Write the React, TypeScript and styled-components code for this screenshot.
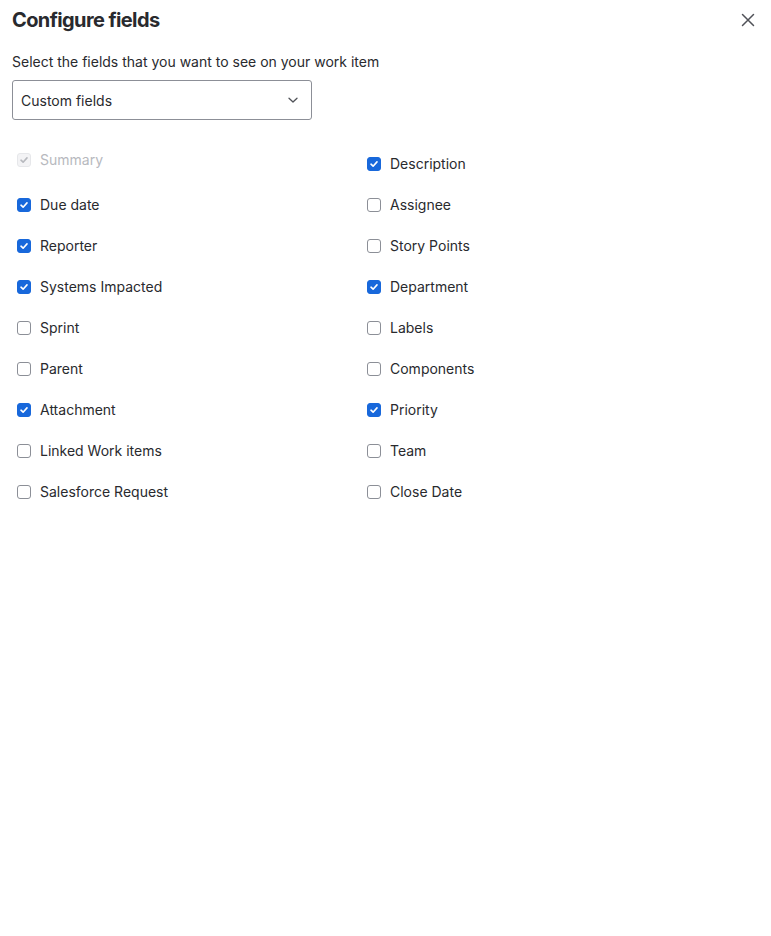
import * as React from 'react'
import styled, { createGlobalStyle } from 'styled-components'

const GlobalStyle = createGlobalStyle`
  html, body {
    margin: 0;
    padding: 0;
    background: #ffffff;
  }
  body {
    font-family: Inter, "Noto Sans", "Liberation Sans", sans-serif;
    color: #292a2e;
    -webkit-font-smoothing: antialiased;
  }
`

type Field = { label: string; checked: boolean; disabled?: boolean }

const LEFT: Field[] = [
  { label: 'Summary', checked: true, disabled: true },
  { label: 'Due date', checked: true },
  { label: 'Reporter', checked: true },
  { label: 'Systems Impacted', checked: true },
  { label: 'Sprint', checked: false },
  { label: 'Parent', checked: false },
  { label: 'Attachment', checked: true },
  { label: 'Linked Work items', checked: false },
  { label: 'Salesforce Request', checked: false }
]

const RIGHT: Field[] = [
  { label: 'Description', checked: true },
  { label: 'Assignee', checked: false },
  { label: 'Story Points', checked: false },
  { label: 'Department', checked: true },
  { label: 'Labels', checked: false },
  { label: 'Components', checked: false },
  { label: 'Priority', checked: true },
  { label: 'Team', checked: false },
  { label: 'Close Date', checked: false }
]

const Panel = styled.div`
  padding: 8px 12px;
  width: 747px;
`

const Header = styled.div`
  display: flex;
  align-items: center;
  justify-content: space-between;
  height: 24px;
`

const Title = styled.h1`
  margin: 0;
  font-size: 20px;
  line-height: 24px;
  font-weight: 700;
  color: #292a2e;
  letter-spacing: -0.6px;
`

const CloseButton = styled.button`
  display: flex;
  align-items: center;
  justify-content: center;
  width: 24px;
  height: 24px;
  margin-right: -1px;
  padding: 0;
  border: none;
  background: transparent;
  color: #505258;
  cursor: pointer;
`

const Subtitle = styled.p`
  margin: 20px 0 8px;
  font-size: 14px;
  line-height: 20px;
  color: #292a2e;
`

const Select = styled.div`
  box-sizing: border-box;
  display: flex;
  align-items: center;
  justify-content: space-between;
  width: 300px;
  height: 40px;
  padding: 0 12px 0 8px;
  border: 1px solid #8c8f97;
  border-radius: 3px;
  font-size: 14px;
  color: #292a2e;
`

const Chevron = styled.span`
  display: flex;
  color: #505258;
`

const FieldGrid = styled.div`
  display: grid;
  grid-template-columns: 350px 350px;
  grid-auto-rows: 41px;
  margin-top: 23px;
`

const Item = styled.label<{ $shift?: boolean }>`
  display: flex;
  align-items: center;
  gap: 9px;
  height: 41px;
  padding-left: 5px;
  margin-top: ${p => (p.$shift ? '-4px' : '0')};
  font-size: 14px;
  line-height: 20px;
  cursor: pointer;
`

const Box = styled.span<{ $checked: boolean; $disabled?: boolean }>`
  box-sizing: border-box;
  display: flex;
  align-items: center;
  justify-content: center;
  width: 14px;
  height: 14px;
  flex: none;
  border-radius: 3px;
  border: 1px solid
    ${p => (p.$disabled ? '#e6e7ea' : p.$checked ? '#1868db' : '#8c8f97')};
  background: ${p =>
    p.$disabled ? '#f3f3f5' : p.$checked ? '#1868db' : '#ffffff'};
  color: ${p => (p.$disabled ? '#b7b9be' : '#ffffff')};
`

const Label = styled.span<{ $disabled?: boolean }>`
  color: ${p => (p.$disabled ? '#b7b9be' : '#292a2e')};
`

function Check({ field, shift }: { field: Field; shift?: boolean }) {
  return (
    <Item $shift={shift}>
      <Box $checked={field.checked} $disabled={field.disabled}>
        {field.checked && (
          <svg width="10" height="10" viewBox="0 0 10 10" fill="none">
            <path
              d="M2 5.2 L4.1 7.2 L8 2.9"
              stroke="currentColor"
              strokeWidth="1.6"
              strokeLinecap="round"
              strokeLinejoin="round"
            />
          </svg>
        )}
      </Box>
      <Label $disabled={field.disabled}>{field.label}</Label>
    </Item>
  )
}

export default function App() {
  return (
    <>
      <GlobalStyle />
      <Panel>
        <Header>
          <Title>Configure fields</Title>
          <CloseButton aria-label="Close">
            <svg width="16" height="16" viewBox="0 0 16 16" fill="none">
              <path
                d="M2.5 2.5 L13.5 13.5 M13.5 2.5 L2.5 13.5"
                stroke="currentColor"
                strokeWidth="1.5"
                strokeLinecap="round"
              />
            </svg>
          </CloseButton>
        </Header>
        <Subtitle>Select the fields that you want to see on your work item</Subtitle>
        <Select>
          <span>Custom fields</span>
          <Chevron>
            <svg width="12" height="12" viewBox="0 0 12 12" fill="none">
              <path
                d="M2 4.2 L6 8 L10 4.2"
                stroke="currentColor"
                strokeWidth="1.3"
                strokeLinecap="round"
                strokeLinejoin="round"
              />
            </svg>
          </Chevron>
        </Select>
        <FieldGrid>
          {LEFT.map((f, i) => (
            <React.Fragment key={f.label}>
              <Check field={f} shift={i === 0} />
              <Check field={RIGHT[i]} />
            </React.Fragment>
          ))}
        </FieldGrid>
      </Panel>
    </>
  )
}
